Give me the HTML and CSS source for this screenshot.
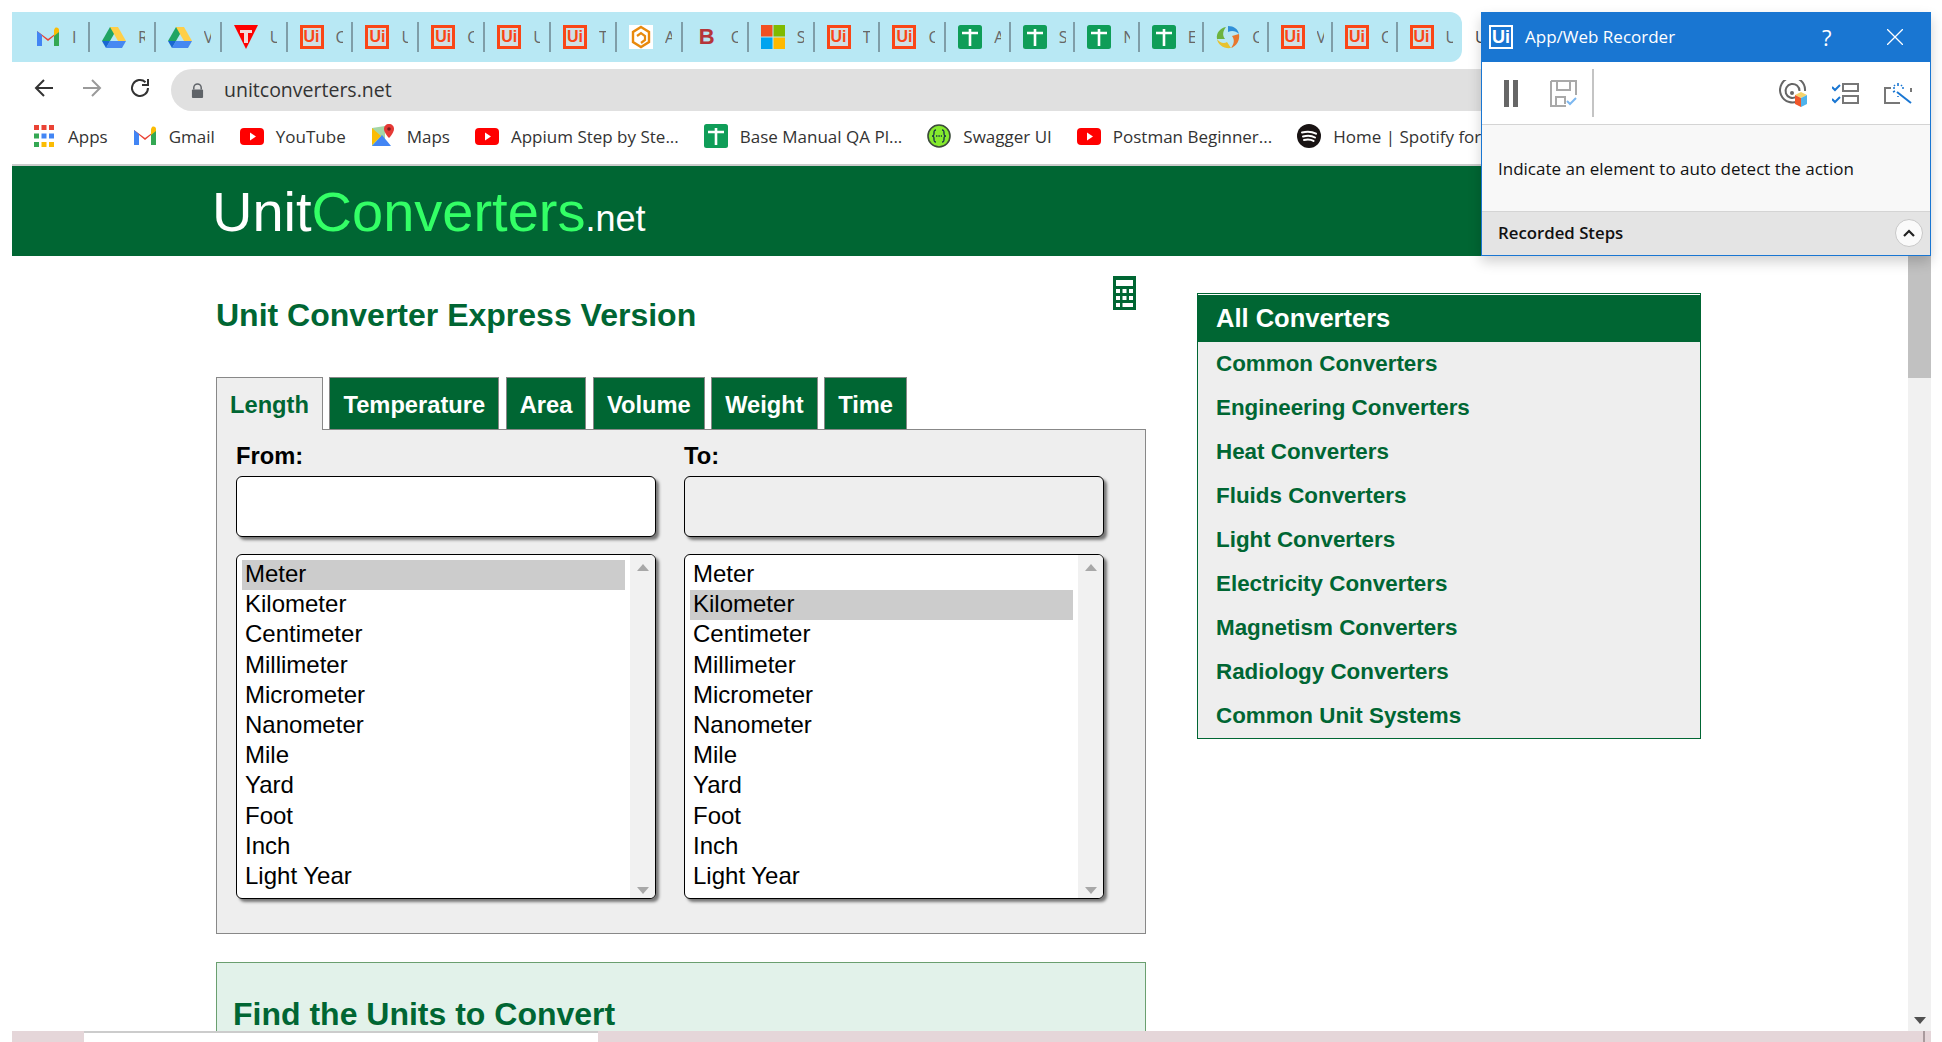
FILE: index.html
```html
<!DOCTYPE html>
<html lang="en">
<head>
    <title>Unit Converter Express Version</title>
    <meta charset="utf-8" />
    <link rel="stylesheet" href="styles.css">
</head>
<body>
    <svg class="defs" width="0" height="0">
        <symbol id="i-gmail" viewBox="0 0 24 24">
            <path d="M1 21V6l11 8 11-8v15h-5V11l-6 5-6-5v10z" fill="#ea4335"/>
            <path d="M1 6v15h5V10z" fill="#4285f4"/>
            <path d="M23 6v15h-5V10z" fill="#34a853"/>
            <path d="M18 5v6l5-4V5c0-2-2-3-4-2z" fill="#fbbc04"/>
        </symbol>
        <symbol id="i-drive" viewBox="0 0 24 24">
            <path d="M8 2h8L8 16H0z" fill="#1fa463"/>
            <path d="M8 2h8l8 14h-8z" fill="#ffcf48"/>
            <path d="M4 23l4-7h16l-4 7z" fill="#4688f1"/>
            <path d="M0 16h8l-4 7z" fill="#1967d2"/>
        </symbol>
        <symbol id="i-redt" viewBox="0 0 24 24">
            <path d="M0 0h24L12 24z" fill="#f00"/>
            <path d="M6 5h12v3h-4v10h-4V8H6z" fill="#f3d9d9"/>
        </symbol>
        <symbol id="i-hex" viewBox="0 0 24 24">
            <rect width="24" height="24" fill="#fff"/>
            <path d="M12 2l8 5v10l-8 5-8-5V7z" fill="none" stroke="#e8890c" stroke-width="2.4"/>
            <path d="M8 11l4-3 4 3v4l-4 3" fill="none" stroke="#e8890c" stroke-width="2.2"/>
        </symbol>
        <symbol id="i-ms" viewBox="0 0 24 24">
            <rect width="11.5" height="11.5" fill="#f25022"/>
            <rect x="12.5" width="11.5" height="11.5" fill="#7fba00"/>
            <rect y="12.5" width="11.5" height="11.5" fill="#00a4ef"/>
            <rect x="12.5" y="12.5" width="11.5" height="11.5" fill="#ffb900"/>
        </symbol>
        <symbol id="i-sheet" viewBox="0 0 24 24">
            <rect width="24" height="24" rx="2.5" fill="#0f9d58"/>
            <path d="M4 8h16M12 4v17" stroke="#fff" stroke-width="2.6"/>
        </symbol>
        <symbol id="i-swirl" viewBox="0 0 24 24">
            <path d="M12 1c6 0 10 3 11 8-3-3-7-4-11-2z" fill="#2f8fd8"/>
            <path d="M23 9c1 6-2 12-8 14 3-4 4-8 1-12z" fill="#e8772e"/>
            <path d="M15 23C8 24 2 20 1 14c3 4 7 5 10 3z" fill="#e8c22e"/>
            <path d="M1 14C0 8 4 3 10 2 7 6 6 10 9 14z" fill="#6db33f"/>
            <circle cx="12" cy="12" r="3" fill="#b8e8f4"/>
        </symbol>
        <symbol id="i-apps" viewBox="0 0 20 24">
            <rect x="0" y="1" width="5" height="5" fill="#ea4335"/>
            <rect x="7.5" y="1" width="5" height="5" fill="#ea4335"/>
            <rect x="15" y="1" width="5" height="5" fill="#ea4335"/>
            <rect x="0" y="9.5" width="5" height="5" fill="#34a853"/>
            <rect x="7.5" y="9.5" width="5" height="5" fill="#4285f4"/>
            <rect x="15" y="9.5" width="5" height="5" fill="#4285f4"/>
            <rect x="0" y="18" width="5" height="5" fill="#34a853"/>
            <rect x="7.5" y="18" width="5" height="5" fill="#fbbc04"/>
            <rect x="15" y="18" width="5" height="5" fill="#fbbc04"/>
        </symbol>
        <symbol id="i-yt" viewBox="0 0 24 24">
            <rect y="4" width="24" height="17" rx="4" fill="#f00"/>
            <path d="M10 8.5l6 4-6 4z" fill="#fff"/>
        </symbol>
        <symbol id="i-maps" viewBox="0 0 24 24">
            <path d="M1 4l13-2v20H1z" fill="#a5d6a7"/>
            <path d="M1 22l10-11 9 11z" fill="#4285f4"/>
            <path d="M1 4l9 8-9 9z" fill="#fbbc04"/>
            <path d="M18 0c3 0 5 2 5 5 0 4-5 9-5 9s-5-5-5-9c0-3 2-5 5-5z" fill="#e53935"/>
            <circle cx="18" cy="5" r="1.8" fill="#7b1c1c"/>
        </symbol>
        <symbol id="i-swagger" viewBox="0 0 24 24">
            <circle cx="12" cy="12" r="11" fill="#85ea2d" stroke="#3b4a3a" stroke-width="1.6"/>
            <path d="M9 6c-2 0-2 1-2 3s0 3-2 3c2 0 2 1 2 3s0 3 2 3M15 6c2 0 2 1 2 3s0 3 2 3c-2 0-2 1-2 3s0 3-2 3" fill="none" stroke="#173647" stroke-width="1.4"/>
            <path d="M9 12h6" stroke="#173647" stroke-width="1.6" stroke-dasharray="1.4 1"/>
        </symbol>
        <symbol id="i-spotify" viewBox="0 0 24 24">
            <circle cx="12" cy="12" r="12" fill="#191414"/>
            <path d="M5 8.5c5-1.4 10-1 14 1.2M6 12.5c4-1 9-.7 12 1M7 16c3.500-.8 7-.5 9.500.9" fill="none" stroke="#fff" stroke-width="2" stroke-linecap="round"/>
        </symbol>
    </svg>

    <div class="browser">
        <div class="tabstrip">
            <div class="tabs">
                <div class="tab"><svg class="tab-icon"><use href="#i-gmail"/></svg><span class="tab-label">I</span></div>
                <div class="tab"><svg class="tab-icon"><use href="#i-drive"/></svg><span class="tab-label">R</span></div>
                <div class="tab"><svg class="tab-icon"><use href="#i-drive"/></svg><span class="tab-label">V</span></div>
                <div class="tab"><svg class="tab-icon"><use href="#i-redt"/></svg><span class="tab-label">U</span></div>
                <div class="tab"><span class="ui-tile">Ui</span><span class="tab-label">C</span></div>
                <div class="tab"><span class="ui-tile">Ui</span><span class="tab-label">U</span></div>
                <div class="tab"><span class="ui-tile">Ui</span><span class="tab-label">C</span></div>
                <div class="tab"><span class="ui-tile">Ui</span><span class="tab-label">U</span></div>
                <div class="tab"><span class="ui-tile">Ui</span><span class="tab-label">T</span></div>
                <div class="tab"><svg class="tab-icon"><use href="#i-hex"/></svg><span class="tab-label">A</span></div>
                <div class="tab"><span class="b-tile">B</span><span class="tab-label">C</span></div>
                <div class="tab"><svg class="tab-icon"><use href="#i-ms"/></svg><span class="tab-label">S</span></div>
                <div class="tab"><span class="ui-tile">Ui</span><span class="tab-label">T</span></div>
                <div class="tab"><span class="ui-tile">Ui</span><span class="tab-label">C</span></div>
                <div class="tab tab-narrow"><svg class="tab-icon"><use href="#i-sheet"/></svg><span class="tab-label">A</span></div>
                <div class="tab tab-narrow"><svg class="tab-icon"><use href="#i-sheet"/></svg><span class="tab-label">S</span></div>
                <div class="tab tab-narrow"><svg class="tab-icon"><use href="#i-sheet"/></svg><span class="tab-label">N</span></div>
                <div class="tab tab-narrow"><svg class="tab-icon"><use href="#i-sheet"/></svg><span class="tab-label">E</span></div>
                <div class="tab tab-narrow"><svg class="tab-icon"><use href="#i-swirl"/></svg><span class="tab-label">C</span></div>
                <div class="tab tab-narrow"><span class="ui-tile">Ui</span><span class="tab-label">V</span></div>
                <div class="tab tab-narrow"><span class="ui-tile">Ui</span><span class="tab-label">C</span></div>
                <div class="tab tab-narrow tab-last"><span class="ui-tile">Ui</span><span class="tab-label">U</span></div>
            </div>
            <div class="tab-active">U</div>
        </div>

        <div class="toolbar">
            <svg class="nav-btn" viewBox="0 0 24 24"><path d="M21 12H4M12 4l-8 8 8 8" fill="none" stroke="#333" stroke-width="2"/></svg>
            <svg class="nav-btn" viewBox="0 0 24 24"><path d="M3 12h17M12 4l8 8-8 8" fill="none" stroke="#9a9a9a" stroke-width="2"/></svg>
            <svg class="nav-btn" viewBox="0 0 24 24"><path d="M20 12a8 8 0 1 1-2.500-5.800M20 3v6h-6" fill="none" stroke="#333" stroke-width="2"/></svg>
            <div class="address">
                <svg class="lock" viewBox="0 0 14 16"><path d="M3 7V5a4 4 0 0 1 8 0v2" fill="none" stroke="#5f6368" stroke-width="1.6"/><rect x="1" y="7" width="12" height="9" rx="1" fill="#5f6368"/></svg>
                <span class="url">unitconverters.net</span>
            </div>
        </div>

        <div class="bookmarks">
            <a class="bm"><svg class="bm-apps"><use href="#i-apps"/></svg>Apps</a>
            <a class="bm"><svg class="bm-icon"><use href="#i-gmail"/></svg>Gmail</a>
            <a class="bm"><svg class="bm-icon"><use href="#i-yt"/></svg>YouTube</a>
            <a class="bm"><svg class="bm-icon"><use href="#i-maps"/></svg>Maps</a>
            <a class="bm"><svg class="bm-icon"><use href="#i-yt"/></svg>Appium Step by Ste...</a>
            <a class="bm"><svg class="bm-icon"><use href="#i-sheet"/></svg>Base Manual QA Pl...</a>
            <a class="bm"><svg class="bm-icon"><use href="#i-swagger"/></svg>Swagger UI</a>
            <a class="bm"><svg class="bm-icon"><use href="#i-yt"/></svg>Postman Beginner...</a>
            <a class="bm"><svg class="bm-icon"><use href="#i-spotify"/></svg>Home | Spotify for...</a>
        </div>

        <div class="site">
            <div class="site-head">
                <div class="logo">Unit<span class="logo-green">Converters</span><span class="logo-net">.net</span></div>
            </div>
            <div class="site-body">
                <div class="content">
                    <div class="main">
                        <div class="title-row">
                            <h1 class="title">Unit Converter Express Version</h1>
                            <svg class="calc" viewBox="0 0 23 34">
                                <rect width="23" height="34" fill="#063"/>
                                <rect x="3" y="4" width="17" height="6" fill="#fff"/>
                                <rect x="3" y="13" width="4" height="4" fill="#fff"/><rect x="9.500" y="13" width="4" height="4" fill="#fff"/><rect x="16" y="13" width="4" height="4" fill="#fff"/>
                                <rect x="3" y="20" width="4" height="4" fill="#fff"/><rect x="9.500" y="20" width="4" height="4" fill="#fff"/><rect x="16" y="20" width="4" height="4" fill="#fff"/>
                                <rect x="3" y="27" width="4" height="4" fill="#fff"/><rect x="9.500" y="27" width="10.500" height="4" fill="#fff"/>
                            </svg>
                        </div>

                        <div class="conv-tabs">
                            <div class="conv-tab conv-tab-on">Length</div>
                            <div class="conv-tab">Temperature</div>
                            <div class="conv-tab">Area</div>
                            <div class="conv-tab">Volume</div>
                            <div class="conv-tab">Weight</div>
                            <div class="conv-tab">Time</div>
                        </div>
                        <div class="conv-panel">
                            <div class="conv-col">
                                <label class="conv-label" for="from">From:</label>
                                <input class="conv-input" id="from" type="text">
                                <div class="unit-list">
                                    <ul class="units">
                                        <li class="unit-on">Meter</li>
                                        <li>Kilometer</li>
                                        <li>Centimeter</li>
                                        <li>Millimeter</li>
                                        <li>Micrometer</li>
                                        <li>Nanometer</li>
                                        <li>Mile</li>
                                        <li>Yard</li>
                                        <li>Foot</li>
                                        <li>Inch</li>
                                        <li>Light Year</li>
                                    </ul>
                                    <div class="list-scroll"><i class="arrow-up"></i><i class="arrow-down"></i></div>
                                </div>
                            </div>
                            <div class="conv-col">
                                <label class="conv-label" for="to">To:</label>
                                <input class="conv-input conv-output" id="to" type="text" readonly>
                                <div class="unit-list">
                                    <ul class="units">
                                        <li>Meter</li>
                                        <li class="unit-on">Kilometer</li>
                                        <li>Centimeter</li>
                                        <li>Millimeter</li>
                                        <li>Micrometer</li>
                                        <li>Nanometer</li>
                                        <li>Mile</li>
                                        <li>Yard</li>
                                        <li>Foot</li>
                                        <li>Inch</li>
                                        <li>Light Year</li>
                                    </ul>
                                    <div class="list-scroll"><i class="arrow-up"></i><i class="arrow-down"></i></div>
                                </div>
                            </div>
                        </div>

                        <div class="find">
                            <h2 class="find-title">Find the Units to Convert</h2>
                        </div>
                    </div>

                    <div class="side">
                        <div class="side-head">All Converters</div>
                        <a class="side-link">Common Converters</a>
                        <a class="side-link">Engineering Converters</a>
                        <a class="side-link">Heat Converters</a>
                        <a class="side-link">Fluids Converters</a>
                        <a class="side-link">Light Converters</a>
                        <a class="side-link">Electricity Converters</a>
                        <a class="side-link">Magnetism Converters</a>
                        <a class="side-link">Radiology Converters</a>
                        <a class="side-link">Common Unit Systems</a>
                    </div>
                </div>
                <div class="page-scroll">
                    <div class="page-thumb"></div>
                    <i class="page-arrow"></i>
                </div>
            </div>
        </div>
    </div>

    <div class="taskbar">
        <div class="task-search"></div>
        <div class="task-clock">10:27 PM</div>
        <div class="task-edge"></div>
    </div>

    <div class="recorder">
        <div class="rec-title">
            <span class="rec-logo">Ui</span>
            <span class="rec-name">App/Web Recorder</span>
            <span class="rec-help">?</span>
            <svg class="rec-close" viewBox="0 0 16 16"><path d="M0 0l16 16M16 0L0 16" stroke="#fff" stroke-width="1.300"/></svg>
        </div>
        <div class="rec-tools">
            <svg class="rec-pause" viewBox="0 0 14 27"><rect width="5" height="27" fill="#666"/><rect x="9" width="5" height="27" fill="#666"/></svg>
            <svg class="rec-save" viewBox="0 0 27 27">
                <path d="M1 1h25v14M1 1v25h15M7 1v9h13V1M6 26v-9h9v7" fill="none" stroke="#a9a9a9" stroke-width="2"/>
                <path d="M17 21l3 3 6-6" fill="none" stroke="#7db8f0" stroke-width="2"/>
            </svg>
            <div class="rec-sep"></div>
            <svg class="rec-target" viewBox="0 0 28 27">
                <path d="M21 20A12.500 12.500 0 1 1 26 11" fill="none" stroke="#666" stroke-width="2"/>
                <path d="M17 17A7 7 0 1 1 20.500 11" fill="none" stroke="#666" stroke-width="2"/>
                <circle cx="13" cy="13" r="2" fill="#666"/>
                <path d="M22 12l6 3-6 3-6-3z" fill="#f6d36b"/>
                <path d="M16 15l6 3v9l-6-3z" fill="#f0562a"/>
                <path d="M28 15l-6 3v9l6-3z" fill="#4fb3ec"/>
            </svg>
            <svg class="rec-steps" viewBox="0 0 27 21">
                <path d="M0 4l3 3 5-5M0 16l3 3 5-5" fill="none" stroke="#1976d2" stroke-width="2"/>
                <rect x="11" y="1" width="15" height="7" fill="none" stroke="#777" stroke-width="2"/>
                <rect x="11" y="13" width="15" height="7" fill="none" stroke="#777" stroke-width="2"/>
            </svg>
            <svg class="rec-magic" viewBox="0 0 28 21">
                <path d="M7 5H1v15h15M27 5v4" fill="none" stroke="#777" stroke-width="2"/>
                <path d="M13 9l14 11" stroke="#1976d2" stroke-width="2"/>
                <path d="M14 0v3M14 13v1M9 5h2M18 5h2M10 2l1 1M18 2l-1 1M9 9l2-1" stroke="#1976d2" stroke-width="1.600"/>
            </svg>
        </div>
        <div class="rec-msg">Indicate an element to auto detect the action</div>
        <div class="rec-steps-bar">
            <span>Recorded Steps</span>
            <span class="rec-toggle"><svg viewBox="0 0 12 8" width="12" height="8"><path d="M1 7l5-5 5 5" fill="none" stroke="#222" stroke-width="2.200"/></svg></span>
        </div>
    </div>
</body>
</html>
```
FILE: styles.css
```css
* { box-sizing: border-box; }
html, body { margin: 0; padding: 0; }
body { width: 1942px; height: 1042px; overflow: hidden; display: flex; flex-direction: column; background: #fff; font-family: "Liberation Sans", Arial, sans-serif; }
.defs { display: block; height: 0; }

/* browser chrome */
.browser { flex: 1; min-height: 0; display: flex; flex-direction: column; padding: 12px 11px 0 12px; }
.tabstrip { display: flex; height: 50px; flex: none; font-family: "Open Sans", sans-serif; }
.tabs { display: flex; width: 1450px; padding-left: 12px; background: #b8e8f4; border-radius: 0 12px 12px 0; }
.tab { width: 66px; height: 30px; margin-top: 10px; display: flex; align-items: center; padding-left: 12px; gap: 12px; border-right: 2px solid #7f9ea8; }
.tab-narrow { width: 64.6px; }
.tab-last { border-right: 0; }
.tab-icon { width: 24px; height: 24px; flex: none; }
.tab-label { width: 7px; overflow: hidden; font-size: 16px; color: #666; white-space: nowrap; }
.tab-active { padding: 14px 0 0 13px; font-size: 16px; color: #444; }
.ui-tile { width: 24px; height: 24px; flex: none; border: 3px solid #fa4616; background: #cfe0e4; color: #fa4616; font: bold 16px/18px "Liberation Sans", sans-serif; text-align: center; }
.b-tile { width: 24px; height: 24px; flex: none; color: #b5353a; font: bold 22px/24px "Liberation Sans", sans-serif; text-align: center; }

.toolbar { display: flex; align-items: center; height: 52px; flex: none; padding-left: 20px; }
.nav-btn { width: 24px; height: 24px; margin-right: 24px; flex: none; }
.address { display: flex; align-items: center; height: 42px; flex: 1; margin: 4px 0 0 -5px; padding: 0 0 2px 20px; border-radius: 21px; background: #e0e0e0; }
.lock { width: 13px; height: 15px; margin: 2px 20px 0 0; }
.url { font: 19.500px "Open Sans", sans-serif; color: #333; }

.bookmarks { display: flex; align-items: center; gap: 25px; height: 50px; flex: none; padding: 0 0 6px 22px; font: 17px "Open Sans", sans-serif; color: #333; overflow: hidden; white-space: nowrap; }
.bm { display: flex; align-items: center; gap: 12px; }
.bm-icon { width: 24px; height: 24px; flex: none; }
.bm-apps { width: 20px; height: 24px; margin-right: 2px; flex: none; }

/* site */
.site { flex: 1; min-height: 0; display: flex; flex-direction: column; border-top: 2px solid #ccc; }
.site-head { height: 90px; flex: none; padding: 12px 0 0 200px; background: #063; }
.logo { font-size: 56px; line-height: 68px; color: #fff; letter-spacing: 0; }
.logo-green { color: #33ff66; }
.logo-net { font-size: 36px; }
.site-body { flex: 1; min-height: 0; display: flex; }
.content { flex: 1; display: flex; align-items: flex-start; overflow: hidden; padding: 20px 0 0 204px; }
.main { width: 930px; flex: none; }

.title-row { display: flex; justify-content: space-between; align-items: flex-start; height: 101px; padding-right: 10px; }
.title { margin: 20px 0 0 0; font-size: 32px; line-height: 38px; color: #063; }
.calc { width: 23px; height: 34px; }

.conv-tabs { display: flex; gap: 6.500px; margin-bottom: -1px; }
.conv-tab { height: 53px; padding: 0 13px; border: 1px solid #888; background: #063; color: #fff; font-size: 23.700px; font-weight: bold; line-height: 54px; }
.conv-tab-on { position: relative; z-index: 1; border-bottom: 0; background: #eee; color: #063; }
.conv-panel { display: flex; gap: 28px; padding: 11px 0 34px 19px; border: 1px solid #888; background: #eee; }
.conv-col { width: 420px; }
.conv-label { display: block; height: 35px; font-size: 23.700px; font-weight: bold; line-height: 30px; }
.conv-input { display: block; width: 420px; height: 61px; border: 1px solid #000; border-radius: 6px; background: #fff; box-shadow: 3px 3px 3px #777; font-size: 24px; }
.conv-output { background: #eee; }
.unit-list { display: flex; height: 345px; margin-top: 17px; border: 1px solid #000; border-radius: 6px; background: #fff; box-shadow: 3px 3px 3px #777; overflow: hidden; }
.units { flex: 1; margin: 5px; padding: 0; list-style: none; font-size: 24px; line-height: 28px; }
.units li { padding: 0 0 2.200px 3px; }
.unit-on { background: #ccc; }
.list-scroll { width: 25px; flex: none; display: flex; flex-direction: column; justify-content: space-between; align-items: center; padding: 9px 0 4px; background: #f1f1f1; }
.arrow-up { border: 6px solid transparent; border-top: 0; border-bottom: 7px solid #a8a8a8; }
.arrow-down { border: 6px solid transparent; border-bottom: 0; border-top: 7px solid #a8a8a8; }

.find { height: 300px; margin-top: 28px; padding: 32px 16px; border: 1px solid #6a9f6f; background: #e2f2ea; }
.find-title { margin: 0; font-size: 32px; line-height: 38px; color: #063; }

.side { width: 504px; flex: none; margin: 17px 0 0 51px; border: 1px solid #063; background: #eee; }
.side-head { height: 48px; padding-left: 18px; border-top: 1px solid #fff; background: #063; color: #fff; font-size: 25.500px; font-weight: bold; line-height: 46px; }
.side-link { display: block; height: 44px; padding-left: 18px; color: #063; font-size: 22.400px; font-weight: bold; line-height: 43px; }

.page-scroll { width: 23px; flex: none; display: flex; flex-direction: column; justify-content: space-between; align-items: center; padding-bottom: 7px; background: #f1f1f1; }
.page-thumb { width: 23px; height: 122px; background: #c1c1c1; }
.page-arrow { border: 6px solid transparent; border-bottom: 0; border-top: 7px solid #505050; }

/* clipped windows taskbar */
.taskbar { display: flex; height: 11px; flex: none; margin: 0 11px 0 12px; background: #e5d6d9; overflow: hidden; }
.task-search { width: 514px; height: 11px; margin-left: 72px; border-top: 2px solid #ccc; background: #fff; }
.task-clock { margin-left: 1162px; padding-top: 9px; font: 16px/16px "Open Sans", sans-serif; color: #111; white-space: nowrap; }
.task-edge { width: 2px; margin-left: auto; margin-right: 6px; background: #a99a9d; }

/* recorder window */
.recorder { position: absolute; left: 1481px; top: 12px; width: 450px; height: 244px; display: flex; flex-direction: column; border: 1px solid #1976d2; background: #fff; box-shadow: 0 6px 12px rgba(0, 0, 0, 0.18); font-family: "Open Sans", sans-serif; color: #111; }
.rec-title { display: flex; align-items: center; height: 49px; flex: none; padding: 0 0 2px 7px; background: #1976d2; color: #fff; }
.rec-logo { width: 24px; height: 24px; border: 2px solid #fff; font: bold 18px/20px "Liberation Sans", sans-serif; text-align: center; }
.rec-name { width: 167px; margin-left: 12px; font-size: 17px; white-space: nowrap; }
.rec-help { margin-left: 130px; font-size: 22px; line-height: 26px; }
.rec-close { width: 16px; height: 16px; margin-left: 55px; }
.rec-tools { display: flex; align-items: center; height: 63px; flex: none; padding-left: 22px; border-bottom: 1px solid #d4d4d4; }
.rec-pause { width: 14px; height: 27px; }
.rec-save { width: 27px; height: 27px; margin-left: 32px; }
.rec-sep { width: 2px; height: 48px; margin-left: 15px; background: #c4c4c4; }
.rec-target { width: 28px; height: 27px; margin-left: 185px; }
.rec-steps { width: 27px; height: 21px; margin-left: 25px; }
.rec-magic { width: 28px; height: 21px; margin-left: 25px; }
.rec-msg { flex: 1; padding: 33px 0 0 16px; background: #f8f8f8; font-size: 17px; line-height: 22px; }
.rec-steps-bar { display: flex; align-items: center; justify-content: space-between; height: 44px; flex: none; padding: 0 7px 3px 16px; border-top: 1px solid #d4d4d4; background: #e4e4e4; font-size: 16.800px; font-weight: 600; }
.rec-toggle { display: flex; align-items: center; justify-content: center; width: 28px; height: 28px; margin-top: 2px; border: 1px solid #c8c8c8; border-radius: 50%; background: #fafafa; }
```
